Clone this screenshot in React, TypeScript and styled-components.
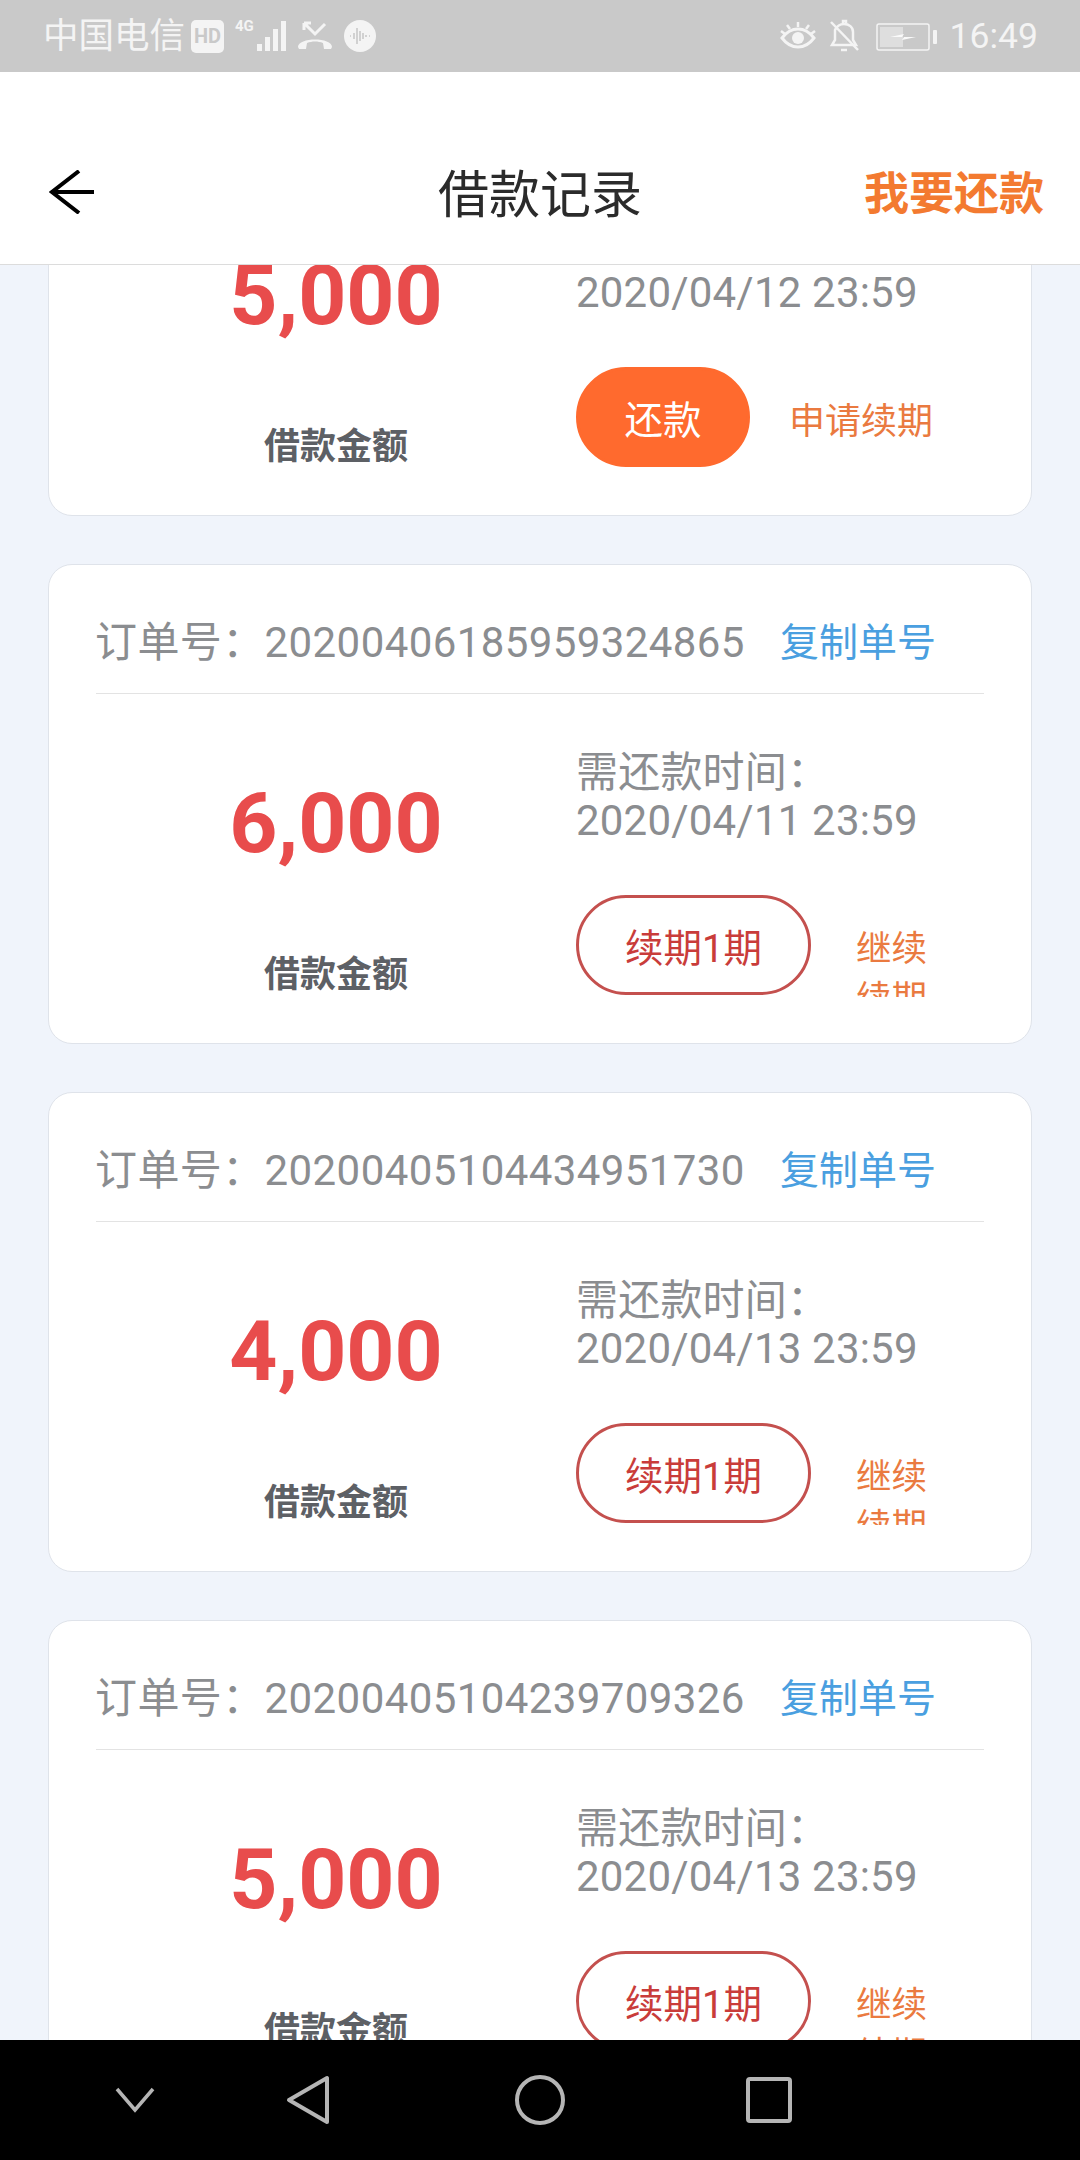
import React from "react";
import styled, { createGlobalStyle } from "styled-components";

const GlobalStyle = createGlobalStyle`
  html, body {
    margin: 0;
    padding: 0;
    background: #f0f4fb;
  }
  * {
    box-sizing: border-box;
  }
`;

const FONT = `Roboto, "Noto Sans CJK SC", sans-serif`;

type Loan = {
  order: string;
  amount: string;
  due: string;
  action: string;
  link: string;
  primary?: boolean;
};

const loans: Loan[] = [
  { order: "", amount: "5,000", due: "2020/04/12 23:59", action: "还款", link: "申请续期", primary: true },
  { order: "20200406185959324865", amount: "6,000", due: "2020/04/11 23:59", action: "续期1期", link: "继续续期" },
  { order: "20200405104434951730", amount: "4,000", due: "2020/04/13 23:59", action: "续期1期", link: "继续续期" },
  { order: "20200405104239709326", amount: "5,000", due: "2020/04/13 23:59", action: "续期1期", link: "继续续期" },
];

const Page = styled.div`
  width: 1080px;
  height: 2160px;
  display: flex;
  flex-direction: column;
  overflow: hidden;
  font-family: ${FONT};
  background: #f0f4fb;
`;

const StatusBar = styled.div`
  height: 72px;
  flex: none;
  display: flex;
  align-items: center;
  padding: 0 42px 0 43px;
  background: #c9c9c9;
  color: #f4f4f4;
`;

const Carrier = styled.span`
  font-size: 35.5px;
  line-height: 72px;
  width: 148px;
`;

const HdBadge = styled.span`
  width: 33px;
  height: 33px;
  border-radius: 5px;
  background: #f4f4f4;
  color: #c9c9c9;
  font-size: 20px;
  font-weight: 700;
  line-height: 33px;
  text-align: center;
`;

const Network = styled.span`
  margin-left: 11px;
  width: 22px;
  height: 34px;
  font-size: 15px;
  font-weight: 700;
  line-height: 15px;
`;

const StatusIcon = styled.svg<{ $gap: number }>`
  margin-left: ${(p) => p.$gap}px;
  flex: none;
  display: block;
`;

const Spacer = styled.div`
  flex: 1;
`;

const Clock = styled.span`
  margin-left: 11px;
  font-size: 35.5px;
  font-weight: 400;
`;

const Header = styled.header`
  height: 193px;
  flex: none;
  display: grid;
  grid-template-columns: 1fr auto 1fr;
  align-items: center;
  padding: 48px 36px 0 36px;
  background: #fff;
  border-bottom: 1px solid #dcdcdc;
`;

const BackIcon = styled.svg`
  margin-left: 13px;
  display: block;
`;

const Title = styled.h1`
  margin: 0 0 3px;
  font-size: 51px;
  font-weight: 400;
  color: #2b2b2b;
`;

const HeaderAction = styled.span`
  justify-self: end;
  margin-bottom: 3px;
  font-size: 45px;
  font-weight: 700;
  color: #f37a30;
`;

const Main = styled.main`
  flex: 1;
  min-height: 0;
  overflow: hidden;
`;

const CardList = styled.div`
  display: flex;
  flex-direction: column;
  gap: 48px;
  padding: 0 48px;
  margin-top: -229px;
`;

const Card = styled.section`
  height: 480px;
  flex: none;
  padding: 0 47px;
  background: #fff;
  border: 1px solid #dfe3ea;
  border-radius: 24px;
`;

const OrderRow = styled.div`
  height: 129px;
  display: flex;
  align-items: center;
  justify-content: space-between;
  padding: 19px 48px 0 0;
  border-bottom: 1px solid #e3e3e3;
`;

const OrderNo = styled.span`
  margin-left: -1px;
  font-size: 42px;
  letter-spacing: 0.4px;
  color: #8b8d90;
  white-space: nowrap;
`;

const CopyLink = styled.span`
  font-size: 39px;
  color: #4a9fe0;
`;

const CardBody = styled.div`
  display: flex;
`;

const AmountCol = styled.div`
  width: 480px;
  display: flex;
  flex-direction: column;
  align-items: center;
  padding-top: 80px;
`;

const Amount = styled.div`
  font-size: 84px;
  font-weight: 700;
  line-height: 100px;
  color: #e84c4c;
`;

const AmountLabel = styled.div`
  margin-top: 75.5px;
  font-size: 36px;
  font-weight: 700;
  line-height: 50px;
  color: #5d6065;
`;

const DueCol = styled.div`
  flex: 1;
  padding-top: 55px;
`;

const DueText = styled.div`
  font-size: 42px;
  line-height: 47.5px;
  letter-spacing: 0.2px;
  color: #8b8d90;
  white-space: nowrap;
`;

const ActionRow = styled.div`
  display: flex;
  margin-top: 51px;
`;

const ActionButton = styled.div<{ $primary?: boolean }>`
  width: ${(p) => (p.$primary ? 174 : 235)}px;
  height: 100px;
  flex: none;
  display: flex;
  align-items: center;
  justify-content: center;
  border-radius: 50px;
  border: 3px solid ${(p) => (p.$primary ? "#ff6a2e" : "#c4504e")};
  background: ${(p) => (p.$primary ? "#ff6a2e" : "#fff")};
  color: ${(p) => (p.$primary ? "#fff" : "#c93c3a")};
  font-size: 38.5px;
`;

const ExtraLink = styled.div<{ $wide?: boolean }>`
  width: ${(p) => (p.$wide ? 146 : 72)}px;
  height: ${(p) => (p.$wide ? 50 : 73)}px;
  margin: ${(p) => (p.$wide ? "30px 0 0 39px" : "29px 0 0 45px")};
  overflow: hidden;
  font-size: ${(p) => (p.$wide ? 36 : 35.5)}px;
  line-height: 50px;
  color: #ea7a40;
`;

const NavBar = styled.nav`
  height: 120px;
  flex: none;
  display: flex;
  align-items: center;
  padding-left: 115px;
  background: #000;
`;

const NavIcon = styled.svg<{ $gap?: number }>`
  margin-left: ${(p) => p.$gap ?? 0}px;
  flex: none;
  display: block;
`;

const App = () => {
  return (
    <Page>
      <GlobalStyle />
      <StatusBar>
        <Carrier>中国电信</Carrier>
        <HdBadge>HD</HdBadge>
        <Network>4G</Network>
        <StatusIcon $gap={0} width="32" height="32" viewBox="0 0 32 32" fill="#f4f4f4">
          <rect x="0" y="24" width="5" height="7" />
          <rect x="8" y="17" width="5" height="14" />
          <rect x="16" y="9" width="5" height="22" />
          <rect x="24" y="1" width="5" height="30" />
        </StatusIcon>
        <StatusIcon $gap={8} width="36" height="30" viewBox="0 0 36 30" fill="none">
          <path d="M7 2v7M7 2h7M7 2l11 11 10-10" stroke="#f4f4f4" strokeWidth="3" />
          <path d="M1 26c0-10 34-10 34 0l-1 2h-7l-1-6c-5-2-11-2-16 0l-1 6H2z" fill="#f4f4f4" />
        </StatusIcon>
        <StatusIcon $gap={11} width="32" height="32" viewBox="0 0 32 32">
          <circle cx="16" cy="16" r="16" fill="#f4f4f4" />
          <path d="M6 16h1M10 13v6M13 8v16M16 11v10M19 13v6M22 15v2M25 16h1" stroke="#c9c9c9" strokeWidth="1.6" />
        </StatusIcon>
        <Spacer />
        <StatusIcon $gap={0} width="36" height="32" viewBox="0 0 36 32" fill="none" stroke="#f4f4f4">
          <path d="M2 18c9-12 23-12 32 0-9 12-23 12-32 0z" strokeWidth="3" />
          <circle cx="18" cy="18" r="6" fill="#f4f4f4" stroke="none" />
          <path d="M18 2v5M7 5l3 4M29 5l-3 4M1 11l4 3M35 11l-4 3" strokeWidth="2.5" />
        </StatusIcon>
        <StatusIcon $gap={12} width="32" height="34" viewBox="0 0 32 34" fill="none" stroke="#f4f4f4" strokeWidth="2.5">
          <path d="M4 26h24l-3-5V13c0-5-4-8-9-8s-7 2-9 6v10z" />
          <path d="M13 31h6M15 4V2h3v2" />
          <path d="M3 3l27 28" />
        </StatusIcon>
        <StatusIcon $gap={16} width="63" height="30" viewBox="0 0 63 30" fill="none">
          <rect x="1" y="3" width="52" height="26" rx="2" stroke="#f4f4f4" strokeWidth="1.5" />
          <rect x="4" y="6" width="23" height="20" fill="#dedede" />
          <path d="M14 16l14-3-2 3 14 0-14 3 2-3z" fill="#fafafa" />
          <rect x="57" y="9" width="4" height="14" rx="1" fill="#f4f4f4" />
        </StatusIcon>
        <Clock>16:49</Clock>
      </StatusBar>

      <Header>
        <BackIcon width="46" height="44" viewBox="0 0 46 44" fill="none" stroke="#000" strokeWidth="4">
          <path d="M45 22H3M30 1L3 22l27 21" />
        </BackIcon>
        <Title>借款记录</Title>
        <HeaderAction>我要还款</HeaderAction>
      </Header>

      <Main>
        <CardList>
          {loans.map((loan, index) => (
            <Card key={index}>
              <OrderRow>
                <OrderNo>订单号：{loan.order}</OrderNo>
                <CopyLink>复制单号</CopyLink>
              </OrderRow>
              <CardBody>
                <AmountCol>
                  <Amount>{loan.amount}</Amount>
                  <AmountLabel>借款金额</AmountLabel>
                </AmountCol>
                <DueCol>
                  <DueText>需还款时间：</DueText>
                  <DueText>{loan.due}</DueText>
                  <ActionRow>
                    <ActionButton $primary={loan.primary}>{loan.action}</ActionButton>
                    <ExtraLink $wide={loan.primary}>{loan.link}</ExtraLink>
                  </ActionRow>
                </DueCol>
              </CardBody>
            </Card>
          ))}
        </CardList>
      </Main>

      <NavBar>
        <NavIcon width="40" height="26" viewBox="0 0 40 26" fill="none" stroke="#b5b5b5" strokeWidth="3.5">
          <path d="M2 2l18 21L38 2" />
        </NavIcon>
        <NavIcon $gap={131} width="44" height="50" viewBox="0 0 44 50" fill="none" stroke="#b5b5b5" strokeWidth="4" strokeLinejoin="round">
          <path d="M41 3v44L3 25z" />
        </NavIcon>
        <NavIcon $gap={185} width="50" height="50" viewBox="0 0 50 50" fill="none" stroke="#b5b5b5" strokeWidth="4">
          <circle cx="25" cy="25" r="23" />
        </NavIcon>
        <NavIcon $gap={181} width="46" height="46" viewBox="0 0 46 46" fill="none" stroke="#b5b5b5" strokeWidth="4">
          <rect x="2" y="2" width="42" height="42" rx="2" />
        </NavIcon>
      </NavBar>
    </Page>
  );
};

export default App;
